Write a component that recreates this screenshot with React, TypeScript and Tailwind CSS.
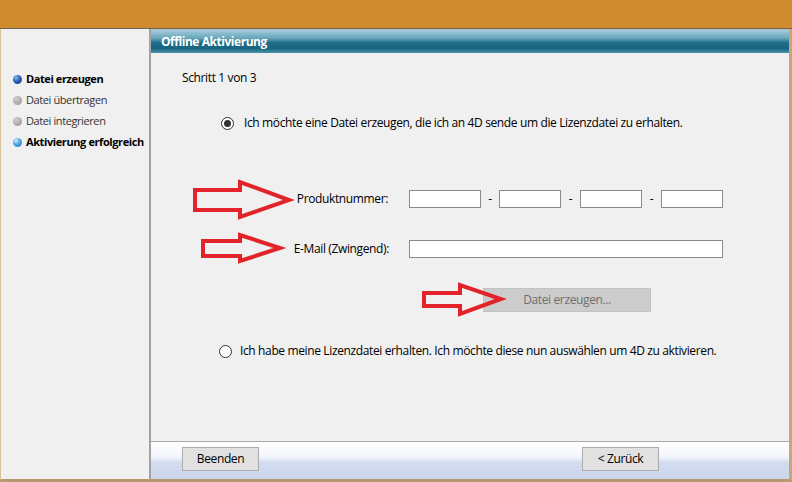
import React from "react";

function Bullet({ kind }: { kind: "dark" | "gray" | "light" }) {
  const bg =
    kind === "dark"
      ? "bg-[radial-gradient(circle_at_35%_30%,#8fb6ea_0%,#2a5fb5_45%,#173c86_100%)]"
      : kind === "light"
      ? "bg-[radial-gradient(circle_at_35%_30%,#d6efff_0%,#4aa6e6_45%,#1d6fb8_100%)]"
      : "bg-[radial-gradient(circle_at_35%_30%,#cfcfcf_0%,#a9a9a9_60%,#959595_100%)]";
  return <span className={`inline-block w-[9px] h-[9px] rounded-full shrink-0 ${bg}`} />;
}

function Radio({ checked }: { checked?: boolean }) {
  return (
    <span className="w-[13px] h-[13px] rounded-full border border-[#333333] bg-white flex items-center justify-center shrink-0">
      {checked && <span className="w-[7px] h-[7px] rounded-full bg-[#333333]" />}
    </span>
  );
}

export default function App() {
  return (
    <div className="relative w-[792px] h-[482px] flex flex-col bg-[#d08b2e] font-['Open_Sans',sans-serif] text-[12px] tracking-[-0.37px] text-black overflow-hidden">
      <div className="h-[29px] shrink-0 border-b border-[#6f665a]" />
      <div className="flex flex-1 min-h-0 border-l border-[#dcc196] border-r-[3px] border-r-[#c9a672] border-b-[3px] border-b-[#b7996b]">
        {/* Left panel */}
        <div className="w-[148px] shrink-0 bg-[#f0f0f0] pt-[40px] pl-[12px] flex flex-col text-[11px] tracking-[-0.4px] whitespace-nowrap">
          <div className="h-[21px] flex items-center gap-[4px] font-bold">
            <Bullet kind="dark" />
            <span>Datei erzeugen</span>
          </div>
          <div className="h-[21px] flex items-center gap-[4px] text-[#333333]">
            <Bullet kind="gray" />
            <span>Datei übertragen</span>
          </div>
          <div className="h-[21px] flex items-center gap-[4px] text-[#333333]">
            <Bullet kind="gray" />
            <span>Datei integrieren</span>
          </div>
          <div className="h-[21px] flex items-center gap-[4px] font-bold">
            <Bullet kind="light" />
            <span>Aktivierung erfolgreich</span>
          </div>
        </div>
        <div className="w-[2px] shrink-0 bg-[#a3a3a3]" />
        {/* Right panel */}
        <div className="flex-1 flex flex-col bg-[#f0f0f0]">
          <div className="h-[24px] shrink-0 border-t border-[#b9b9b9] bg-[linear-gradient(to_bottom,#a2cddb_0%,#6aa6bb_35%,#1f6e89_55%,#186580_80%,#4b93ab_100%)] flex items-center pl-[10px] text-white font-bold text-[12px] tracking-[-0.45px]">
            Offline Aktivierung
          </div>
          <div className="flex-1 flex flex-col whitespace-nowrap">
            <div className="mt-[16px] h-[18px] leading-[18px] pl-[31px]">Schritt 1 von 3</div>
            <div className="mt-[27px] h-[18px] flex items-center pl-[70px] gap-[10px]">
              <Radio checked />
              <span className="leading-[18px]">Ich möchte eine Datei erzeugen, die ich an 4D sende um die Lizenzdatei zu erhalten.</span>
            </div>
            <div className="mt-[58px] h-[18px] flex items-center">
              <div className="w-[237px] text-right leading-[18px]">Produktnummer:</div>
              <div className="ml-[21px] flex items-center">
                <div className="w-[72px] h-[18px] bg-white border border-[#8a8a8a]" />
                <div className="w-[18px] text-center">-</div>
                <div className="w-[62px] h-[18px] bg-white border border-[#8a8a8a]" />
                <div className="w-[19px] text-center">-</div>
                <div className="w-[62px] h-[18px] bg-white border border-[#8a8a8a]" />
                <div className="w-[19px] text-center">-</div>
                <div className="w-[62px] h-[18px] bg-white border border-[#8a8a8a]" />
              </div>
            </div>
            <div className="mt-[32px] h-[18px] flex items-center">
              <div className="w-[238px] text-right leading-[18px]">E-Mail (Zwingend):</div>
              <div className="ml-[20px] w-[314px] h-[18px] bg-white border border-[#8a8a8a]" />
            </div>
            <div className="mt-[30px] ml-[332px] w-[168px] h-[24px] bg-[#cccccc] border border-[#c2c2c2] flex items-center justify-center text-[#6f6f6f]">
              Datei erzeugen...
            </div>
            <div className="mt-[30px] h-[18px] flex items-center pl-[68px] gap-[8px]">
              <Radio />
              <span className="leading-[18px]">Ich habe meine Lizenzdatei erhalten. Ich möchte diese nun auswählen um 4D zu aktivieren.</span>
            </div>
          </div>
          <div className="h-[38px] shrink-0 border-t border-[#a9a9a9] bg-[linear-gradient(to_bottom,#ffffff_0%,#f2f5fb_40%,#d3dcef_55%,#ccd6eb_100%)] pt-[5px] pl-[31px] flex items-start">
            <div className="w-[77px] h-[24px] bg-[#e1e1e1] border border-[#adadad] flex items-center justify-center">Beenden</div>
            <div className="ml-[323px] w-[77px] h-[24px] bg-[#e1e1e1] border border-[#adadad] flex items-center justify-center">&lt; Zurück</div>
          </div>
        </div>
      </div>
      {/* Annotation arrows */}
      <svg className="absolute inset-0 pointer-events-none" width="792" height="482" viewBox="0 0 792 482">
        <g fill="none" stroke="#e2232a" strokeWidth="4" strokeLinejoin="miter">
          <polygon points="195,190 240,190 240,182 289,200 240,217 240,210 195,210" />
          <polygon points="203,241 240,241 240,235 280,248 240,261 240,256 203,256" />
          <polygon points="424,293 460,293 460,285 501,299 460,314 460,306 424,306" />
        </g>
      </svg>
    </div>
  );
}
